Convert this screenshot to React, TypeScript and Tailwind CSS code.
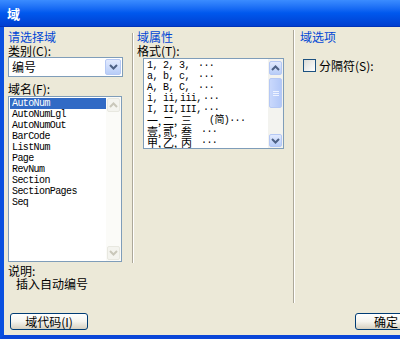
import React from 'react';

const cjk = '"Noto Sans CJK SC", "Liberation Sans", sans-serif';
const mono = '"Liberation Mono", "Noto Sans CJK SC", monospace';

const fields = ['AutoNum', 'AutoNumLgl', 'AutoNumOut', 'BarCode', 'ListNum', 'Page', 'RevNum', 'Section', 'SectionPages', 'Seq'];

const formats: { cells: string[]; widths: string[]; cjkRow?: boolean }[] = [
  { cells: ['1,', '2,', '3,', '···'], widths: ['w-[16px]', 'w-[16px]', 'w-[19px]'] },
  { cells: ['a,', 'b,', 'c,', '···'], widths: ['w-[16px]', 'w-[16px]', 'w-[19px]'] },
  { cells: ['A,', 'B,', 'C,', '···'], widths: ['w-[16px]', 'w-[16px]', 'w-[19px]'] },
  { cells: ['i,', 'ii,', 'iii,', '···'], widths: ['w-[16px]', 'w-[17px]', 'w-[23px]'] },
  { cells: ['I,', 'II,', 'III,', '···'], widths: ['w-[16px]', 'w-[17px]', 'w-[23px]'] },
  { cells: ['一,', '二,', '三', '(简)···'], widths: ['w-[16px]', 'w-[18px]', 'w-[28px]'], cjkRow: true },
  { cells: ['壹,', '贰,', '叁', '···'], widths: ['w-[16px]', 'w-[18px]', 'w-[20px]'], cjkRow: true },
  { cells: ['甲,', '乙,', '丙', '···'], widths: ['w-[16px]', 'w-[18px]', 'w-[20px]'], cjkRow: true },
];

const Sep: React.FC<{ className: string }> = ({ className }) => (
  <div className={`w-[2px] shrink-0 border-l border-l-[#aca899] border-r border-r-white ${className}`} />
);

const Arrow: React.FC<{ up?: boolean; color: string }> = ({ up, color }) => (
  <svg width="9" height="6" viewBox="0 0 9 6">
    <path d={up ? 'M1 5 L4.5 1.5 L8 5' : 'M1 1 L4.5 4.5 L8 1'} fill="none" stroke={color} strokeWidth="2" />
  </svg>
);

const XpButton: React.FC<{ label: string; className: string }> = ({ label, className }) => (
  <div
    className={`h-[17px] shrink-0 rounded-[3px] border border-[#003c74] bg-gradient-to-b from-white via-[#f5f4ee] to-[#d6d0c0] flex items-center justify-center text-[12px] leading-none text-black ${className}`}
    style={{ fontFamily: cjk }}
  >
    {label}
  </div>
);

export default function App() {
  return (
    <div className="w-[400px] h-[339px] overflow-hidden flex flex-col bg-[#ece9d8] select-none" style={{ fontFamily: cjk }}>
      {/* title bar */}
      <div className="h-[27px] shrink-0 bg-gradient-to-b from-[#3b8cff] via-[#0058ee] to-[#003fd0] border-b border-b-[#0033b8] flex items-center pl-[7px]">
        <span className="text-white font-bold text-[13px] leading-none">域</span>
      </div>

      <div className="flex-1 flex flex-col border-l-4 border-l-[#0a50e0] border-b-4 border-b-[#0a46d8] min-h-0">
        <div className="flex h-[276px] shrink-0">
          {/* col 1 */}
          <div className="w-[128px] shrink-0 pl-[4px] flex flex-col">
            <div className="mt-[3px] h-[14px] leading-[14px] text-[12px] text-[#0046d5]">请选择域</div>
            <div className="h-[13px] leading-[13px] text-[12px] text-black">类别(C):</div>
            <div className="w-[115px] h-[20px] border border-[#7f9db9] bg-white flex items-center">
              <span className="pl-[3px] flex-1 text-[12px] text-black leading-none">编号</span>
              <div className="w-[16px] h-[16px] mr-[1px] rounded-[2px] border border-[#b5c8f4] bg-gradient-to-b from-[#e2eafe] to-[#b8cdf8] flex items-center justify-center">
                <Arrow color="#4d6185" />
              </div>
            </div>
            <div className="mt-[5px] h-[14px] leading-[14px] text-[12px] text-black">域名(F):</div>
            <div className="w-[114px] h-[166px] border border-[#7f9db9] bg-white flex">
              <div className="flex-1 pt-[1px] pl-[1px]">
                {fields.map((f, i) => (
                  <div
                    key={f}
                    className={`h-[11px] leading-[11px] pl-[2px] text-[10px] tracking-[-0.6px] ${i === 0 ? 'bg-[#316ac5] text-white' : 'text-black'}`}
                    style={{ fontFamily: mono }}
                  >
                    {f}
                  </div>
                ))}
              </div>
              <div className="w-[15px] flex flex-col bg-[#fbfbf8]">
                <div className="h-[14px] m-[1px] rounded-[2px] border border-[#e8e8e0] bg-[#f4f4ef] flex items-center justify-center">
                  <Arrow up color="#c9c7ba" />
                </div>
                <div className="flex-1" />
                <div className="h-[14px] m-[1px] rounded-[2px] border border-[#e8e8e0] bg-[#f4f4ef] flex items-center justify-center">
                  <Arrow color="#c9c7ba" />
                </div>
              </div>
            </div>
            <div className="mt-[2px] h-[13px] leading-[13px] text-[12px] text-black">说明:</div>
            <div className="pl-[8px] h-[13px] leading-[13px] text-[12px] text-black">插入自动编号</div>
          </div>

          <Sep className="mt-[6px] h-[230px]" />

          {/* col 2 */}
          <div className="w-[159px] shrink-0 pl-[3px] flex flex-col">
            <div className="mt-[3px] h-[14px] leading-[14px] text-[12px] text-[#0046d5]">域属性</div>
            <div className="h-[14px] leading-[14px] text-[12px] text-black">格式(T):</div>
            <div className="ml-[6px] w-[141px] h-[91px] border border-[#7f9db9] bg-white flex overflow-hidden">
              <div className="flex-1 pt-[1px] pl-[3px] overflow-hidden">
                {formats.map((r, i) => (
                  <div key={i} className="h-[11px] flex items-center whitespace-nowrap text-black overflow-visible">
                    {r.cells.map((c, j) => (
                      <span
                        key={j}
                        className={`${j < 3 ? r.widths[j] : ''} shrink-0 ${r.cjkRow && j < 3 ? 'text-[11px]' : 'text-[10px] tracking-[-0.6px]'} leading-[11px]`}
                        style={{ fontFamily: r.cjkRow && j < 3 ? cjk : mono }}
                      >
                        {c}
                      </span>
                    ))}
                  </div>
                ))}
              </div>
              <div className="w-[15px] shrink-0 flex flex-col bg-[#f3f3ef]">
                <div className="h-[14px] m-[1px] mt-[2px] rounded-[2px] border border-[#b5c8f4] bg-gradient-to-b from-[#e2eafe] to-[#b8cdf8] flex items-center justify-center">
                  <Arrow up color="#4d6185" />
                </div>
                <div className="mt-[2px] h-[30px] mx-[1px] rounded-[2px] border border-[#b5c8f4] bg-gradient-to-r from-[#c9d8fc] to-[#b3c8f8] flex flex-col items-center justify-center gap-[1px]">
                  <div className="w-[6px] h-[1px] bg-[#eef3ff]" />
                  <div className="w-[6px] h-[1px] bg-[#eef3ff]" />
                  <div className="w-[6px] h-[1px] bg-[#eef3ff]" />
                </div>
                <div className="flex-1" />
                <div className="h-[13px] m-[1px] rounded-[2px] border border-[#b5c8f4] bg-gradient-to-b from-[#e2eafe] to-[#b8cdf8] flex items-center justify-center">
                  <Arrow color="#4d6185" />
                </div>
              </div>
            </div>
          </div>

          <Sep className="mt-[3px] h-[273px]" />

          {/* col 3 */}
          <div className="flex-1 pl-[5px] flex flex-col">
            <div className="mt-[3px] h-[14px] leading-[14px] text-[12px] text-[#0046d5]">域选项</div>
            <div className="mt-[15px] flex items-center pl-[3px]">
              <div className="w-[13px] h-[13px] border border-[#1c5180] bg-gradient-to-br from-[#dcdcd7] to-white" />
              <span className="ml-[3px] text-[12px] leading-none text-black">分隔符(S):</span>
            </div>
          </div>
        </div>

        <div className="mt-[10px] flex">
          <XpButton label="域代码(I)" className="ml-[6px] w-[78px]" />
          <div className="flex-1" />
          <XpButton label="确定" className="w-[62px] mr-[-17px]" />
        </div>
      </div>
    </div>
  );
}
